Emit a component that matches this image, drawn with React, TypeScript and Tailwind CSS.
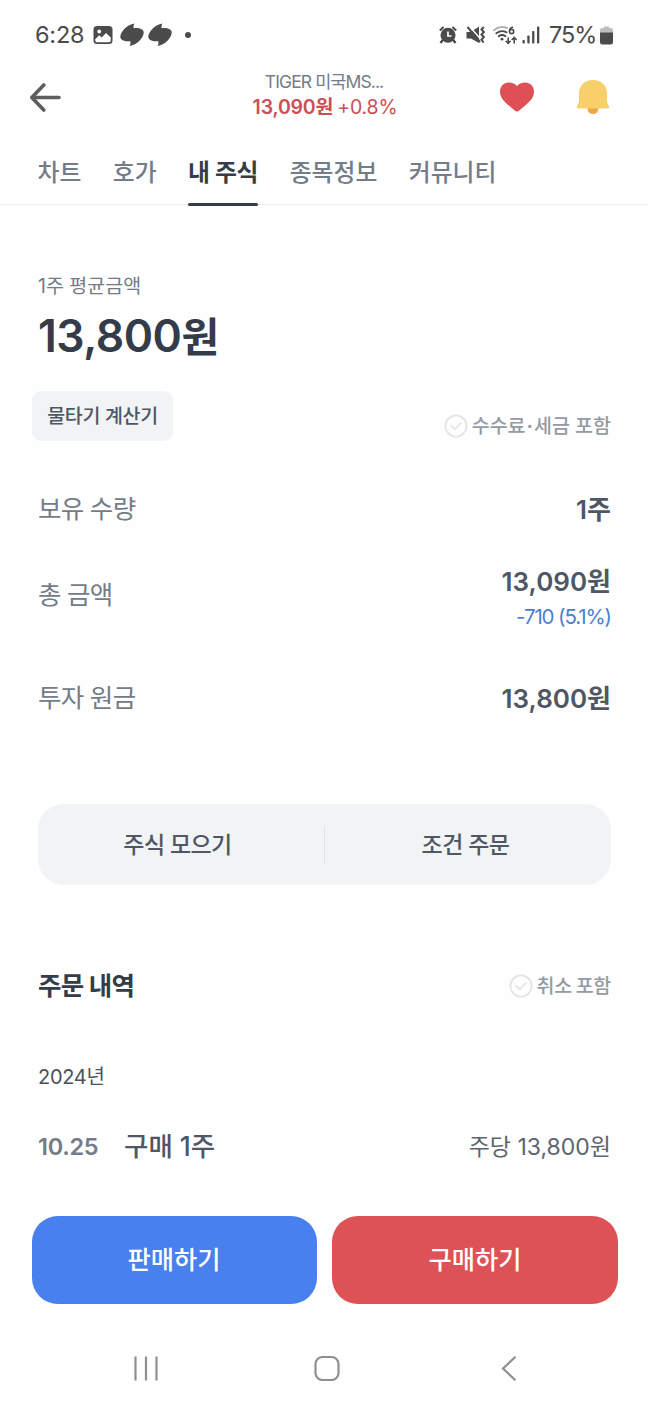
import type { ReactNode } from "react";

const tabs = [
  { label: "차트", active: false },
  { label: "호가", active: false },
  { label: "내 주식", active: true },
  { label: "종목정보", active: false },
  { label: "커뮤니티", active: false },
];

function SwirlIcon() {
  return (
    <svg width="24" height="24" viewBox="0 0 24 24" fill="#4b4b4b">
      <path d="M14.400 0.500C13.600 2 13.300 3.600 13.700 5.200C19.500 4.600 24 6.300 23.700 10C23.200 15 17 21.800 9.600 23C10.500 21.400 10.700 19.800 10.300 18.200C4.500 18.800 0 17.200 0.300 13.600C0.800 8.500 7 1.700 14.400 0.500Z" />
    </svg>
  );
}

function ImageIcon() {
  return (
    <svg width="20" height="20" viewBox="0 0 20 20">
      <rect x="0.500" y="1" width="19" height="18" rx="3.500" fill="#4b4b4b" />
      <circle cx="6.200" cy="6.500" r="1.900" fill="#fff" />
      <path d="M2.200 14.200L6.200 10.200L8.600 12.400L13 8L17.800 12.600V15.300Q17.800 17.200 16 17.200H4Q2.200 17.200 2.200 15.300Z" fill="#fff" />
    </svg>
  );
}

function AlarmIcon() {
  return (
    <svg width="18" height="18" viewBox="0 0 18 18" fill="none" stroke="#4b4b4b">
      <circle cx="9" cy="9.300" r="7.500" fill="#4b4b4b" stroke="none" />
      <path d="M0.800 4.500L4.600 1M17.200 4.500L13.400 1" strokeWidth="2" />
      <path d="M3.800 14L1.500 17M14.200 14L16.500 17" strokeWidth="2.400" />
      <path d="M9 5.500V10H12.500" stroke="#fff" strokeWidth="1.700" />
    </svg>
  );
}

function MuteVibrateIcon() {
  return (
    <svg width="19" height="18" viewBox="0 0 19 18" fill="none" stroke="#4b4b4b">
      <path d="M0.500 6H5L13 0.500V17L5 12.500H0.500Z" fill="#4b4b4b" stroke="none" />
      <path d="M3.500 0.500L15.500 14" stroke="#fff" strokeWidth="1.500" />
      <path d="M1.500 1L14 16" strokeWidth="2" />
      <path d="M17.800 1L15.500 3.500L17.800 6L15.500 8.500L17.800 11L15.500 13.500L17.500 16.500" strokeWidth="2" />
    </svg>
  );
}

function WifiIcon() {
  return (
    <svg width="25" height="19" viewBox="0 0 25 19" fill="none" stroke="#4b4b4b" strokeLinecap="round">
      <path d="M1 4.200Q7 -0.800 14 2" stroke="#b0b0b0" strokeWidth="1.900" />
      <path d="M3.300 7.300Q8.500 3.500 13.500 6.300" strokeWidth="1.900" />
      <path d="M5.700 10.200Q9 7.800 12.500 10.200" strokeWidth="1.900" />
      <circle cx="9" cy="13.200" r="1.400" fill="#4b4b4b" stroke="none" />
      <path d="M19.500 1.200Q16.800 1.800 16.500 5" strokeWidth="1.600" />
      <circle cx="18.600" cy="5.500" r="2.100" strokeWidth="1.600" />
      <path d="M15.200 12V17M13.200 15.300L15.200 17.300L17.200 15.300M21.200 17V12M19.200 13.500L21.200 11.500L23.200 13.500" strokeWidth="1.600" />
    </svg>
  );
}

function SignalIcon() {
  return (
    <svg width="18" height="18" viewBox="0 0 18 18" fill="#4b4b4b">
      <rect x="0.500" y="14" width="2.300" height="3.500" rx="0.800" />
      <rect x="5.300" y="9.500" width="2.300" height="8" rx="0.800" />
      <rect x="10.100" y="5" width="2.300" height="12.500" rx="0.800" />
      <rect x="15" y="0.500" width="2.300" height="17" rx="0.800" />
    </svg>
  );
}

function BatteryIcon() {
  return (
    <svg width="13" height="19" viewBox="0 0 13 19">
      <path d="M4 0.500H9V2H11Q13 2 13 4V7H0V4Q0 2 2 2H4Z" fill="#bdbdbd" />
      <path d="M0 6.500H13V16Q13 18.500 10.500 18.500H2.500Q0 18.500 0 16Z" fill="#4b4b4b" />
    </svg>
  );
}

function CheckLabel({ children }: { children: ReactNode }) {
  return (
    <div className="flex items-center gap-[4px] text-[19.5px] leading-[28px] font-medium text-[#959ba3]">
      <svg width="24" height="24" viewBox="0 0 24 24" fill="none" stroke="#e3e5e8" strokeLinecap="round" strokeLinejoin="round">
        <circle cx="12" cy="12" r="10.600" strokeWidth="1.800" />
        <path d="M7.200 12L10.800 15.300L16.800 9.200" strokeWidth="1.900" />
      </svg>
      <span>{children}</span>
    </div>
  );
}

export default function App() {
  return (
    <div className="flex h-[1404px] w-[648px] flex-col overflow-hidden bg-[#fefefe] font-['Inter','Noto_Sans_CJK_KR',sans-serif] whitespace-nowrap text-[#4e5763]">
      <div className="flex h-[70px] items-center pr-[35px] pl-[35px] text-[23.5px] text-[#4b4b4b]">
        <span className="w-[58px] tracking-[-0.2px]">6:28</span>
        <ImageIcon />
        <span className="ml-[7px] flex gap-[4px]">
          <SwirlIcon />
          <SwirlIcon />
        </span>
        <span className="ml-[13px] size-[6px] rounded-full bg-[#4b4b4b]" />
        <span className="ml-auto flex items-center">
          <AlarmIcon />
          <span className="ml-[9px]"><MuteVibrateIcon /></span>
          <span className="ml-[8px]"><WifiIcon /></span>
          <span className="ml-[4px]"><SignalIcon /></span>
          <span className="ml-[9px] w-[51px] tracking-[-1.1px]">75%</span>
          <BatteryIcon />
        </span>
      </div>

      <header className="grid h-[54px] grid-cols-[1fr_200px_1fr] items-center">
        <svg className="ml-[29px]" width="32" height="30" viewBox="0 0 32 30" fill="none" stroke="#5e5e5e" strokeWidth="3.600" strokeLinecap="round" strokeLinejoin="round">
          <path d="M30 15.500H3M14.800 3L2.800 15.500L14.800 28" />
        </svg>
        <div className="-mt-[4px] flex flex-col items-center">
          <span className="h-[24px] text-[17.5px] leading-[24px] tracking-[-0.9px] text-[#747c87]">TIGER 미국MS...</span>
          <span className="h-[26px] pl-[2px] text-[19.5px] leading-[26px] tracking-[-0.2px] text-[#cc4f55]">
            <b className="font-semibold">13,090원</b>
            <span className="ml-[4px]">+0.8%</span>
          </span>
        </div>
        <div className="flex items-center justify-end gap-[41px] pr-[38px]">
          <svg width="36" height="32" viewBox="0 0 36 32" fill="#de5055">
            <path d="M18 30.500C16.800 30.500 14.500 28.600 11 25.500C5.200 20.700 1 16.500 1 10.800C1 5.300 4.800 1.500 9.700 1.500C13.300 1.500 16.400 2.800 18 5.200C19.600 2.800 22.700 1.500 26.300 1.500C31.200 1.500 35 5.300 35 10.800C35 16.500 30.800 20.700 25 25.500C21.500 28.600 19.200 30.500 18 30.500Z" />
          </svg>
          <svg width="34" height="36" viewBox="0 0 34 36">
            <circle cx="17" cy="29.500" r="5.500" fill="#eda84a" />
            <path d="M17 1C25.500 1 31 6.500 31 14.500V23L33 27.500Q33.700 29.500 31.500 29.500H2.500Q0.300 29.500 1 27.500L3 23V14.500C3 6.500 8.500 1 17 1Z" fill="#f7cf6b" />
          </svg>
        </div>
      </header>

      <nav className="flex h-[81px] gap-[31.5px] border-b border-[#eeeff1] pt-[14px] pl-[37.5px] text-[23.8px] font-medium text-[#747c87]">
        {tabs.map((tab) =>
          tab.active ? (
            <span key={tab.label} className="relative flex h-[66px] items-center pt-[3px] font-bold tracking-[-0.3px] text-[#343c49]">
              {tab.label}
              <i className="absolute right-0 -bottom-[2px] left-0 h-[3px] rounded-full bg-[#343c49]" />
            </span>
          ) : (
            <span key={tab.label} className="flex h-[66px] items-center pt-[3px]">{tab.label}</span>
          ),
        )}
      </nav>

      <main className="flex flex-col pr-[37px] pl-[38px]">
        <div className="mt-[67px] h-[28px] text-[19.5px] leading-[28px] text-[#747c87]">1주 평균금액</div>
        <div className="mt-[6px] h-[60px] text-[44.5px] leading-[60px] font-semibold tracking-[-0.5px] text-[#343c49]">
          13,800<span className="text-[41px] tracking-[-1px]">원</span>
        </div>
        <div className="mt-[25px] -ml-[6px] flex h-[50px] items-start justify-between">
          <button className="h-[50px] w-[141px] rounded-[9px] bg-[#f2f3f5] pt-[2px] text-[19.5px] font-medium tracking-[-0.3px] text-[#4e5763]">물타기 계산기</button>
          <div className="pt-[21px]">
            <CheckLabel>
              수수료<span className="mx-[1px] font-bold">·</span>세금 포함
            </CheckLabel>
          </div>
        </div>

        <div className="mt-[48px] flex h-[40px] items-center justify-between text-[26px]">
          <span className="text-[25.5px] tracking-[-0.6px] [word-spacing:-0.5px] text-[#747c87]">보유 수량</span>
          <span className="font-semibold">1주</span>
        </div>
        <div className="mt-[35px] flex h-[70px] items-start justify-between text-[26px]">
          <span className="pt-[11px] text-[25.5px] leading-[40px] tracking-[-0.6px] [word-spacing:-0.5px] text-[#747c87]">총 금액</span>
          <div className="flex flex-col items-end">
            <span className="h-[34px] leading-[35px] font-semibold">13,090원</span>
            <span className="h-[36px] text-[20.5px] leading-[38px] tracking-[-1.1px] text-[#4a80d4]">-710 (5.1%)</span>
          </div>
        </div>
        <div className="mt-[44px] flex h-[40px] items-center justify-between text-[26px]">
          <span className="text-[25.5px] tracking-[-0.6px] [word-spacing:-0.5px] text-[#747c87]">투자 원금</span>
          <span className="font-semibold">13,800원</span>
        </div>

        <div className="mt-[86px] flex h-[81px] items-center rounded-[26px] bg-[#f2f3f5] text-[23px] font-medium tracking-[-0.6px] [word-spacing:-1px]">
          <button className="w-[286px] pt-[2px] pr-[7px]">주식 모으기</button>
          <span className="h-[38px] w-px bg-[#e0e2e5]" />
          <button className="flex-1 pt-[2px] pr-[5px]">조건 주문</button>
        </div>

        <div className="mt-[80px] flex h-[40px] items-center justify-between pt-[2px]">
          <h2 className="text-[25.5px] font-bold tracking-[-0.6px] [word-spacing:-0.5px] text-[#343c49]">주문 내역</h2>
          <span className="[word-spacing:-1px] tracking-[-0.3px]"><CheckLabel>취소 포함</CheckLabel></span>
        </div>
        <div className="mt-[58px] h-[28px] text-[20px] leading-[28px] tracking-[-0.3px] text-[#4a515c]">2024년</div>
        <div className="mt-[35px] flex h-[40px] items-center pt-[2px]">
          <span className="w-[86px] text-[23.5px] font-semibold tracking-[-0.3px] text-[#747c87]">10.25</span>
          <span className="text-[26.500px] font-medium">구매 1주</span>
          <span className="ml-auto text-[23px] text-[#5c6570]">주당 13,800원</span>
        </div>
      </main>

      <div className="mt-[50px] grid h-[88px] shrink-0 grid-cols-[285px_286px] gap-[15px] pr-[30px] pl-[32px] text-[25.3px] font-medium text-white">
        <button className="rounded-[26px] bg-[#4880ee] pr-[1px]">판매하기</button>
        <button className="rounded-[26px] bg-[#dd5257]">구매하기</button>
      </div>

      <div className="mt-[28px] flex h-[72px] items-center justify-between pr-[130px] pl-[134px]">
        <svg width="24" height="26" viewBox="0 0 24 26" stroke="#8f8f8f" strokeWidth="2.200">
          <path d="M1.500 1.500V25.500M12 1.500V25.500M22.500 1.500V25.500" />
        </svg>
        <svg className="-ml-[4px]" width="26" height="26" viewBox="0 0 26 26" fill="none" stroke="#8f8f8f" strokeWidth="2.200">
          <rect x="1.500" y="2" width="23" height="23" rx="7" />
        </svg>
        <svg width="18" height="26" viewBox="0 0 18 26" fill="none" stroke="#8f8f8f" strokeWidth="2.200">
          <path d="M15.500 1.700L3 13.500L15.500 25.300" />
        </svg>
      </div>
    </div>
  );
}
